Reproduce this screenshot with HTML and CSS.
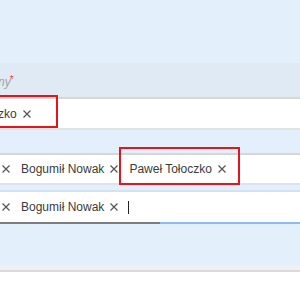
FILE: index.html
```html
<!doctype html>
<html lang="pl">
<head>
<meta charset="utf-8">
<title>Osoby</title>
<link rel="stylesheet" href="styles.css">
</head>
<body>

<div class="panel">
    <div class="top"></div>
    <div class="label">ny<span class="req">*</span></div>

    <div class="field f1">
        <span class="tag mark1">zko<svg class="x" viewBox="0 0 8 8"><path d="M0.5 0.5L7.5 7.5M7.5 0.5L0.5 7.5"/></svg></span>
    </div>

    <div class="field f2">
        <span class="tag lead"><svg class="x" viewBox="0 0 8 8"><path d="M0.5 0.5L7.5 7.5M7.5 0.5L0.5 7.5"/></svg></span>
        <span class="tag">Bogumił Nowak<svg class="x" viewBox="0 0 8 8"><path d="M0.5 0.5L7.5 7.5M7.5 0.5L0.5 7.5"/></svg></span>
        <span class="tag mark2">Paweł Tołoczko<svg class="x" viewBox="0 0 8 8"><path d="M0.5 0.5L7.5 7.5M7.5 0.5L0.5 7.5"/></svg></span>
    </div>

    <div class="field f3">
        <div class="line">
            <span class="tag lead"><svg class="x" viewBox="0 0 8 8"><path d="M0.5 0.5L7.5 7.5M7.5 0.5L0.5 7.5"/></svg></span>
            <span class="tag">Bogumił Nowak<svg class="x" viewBox="0 0 8 8"><path d="M0.5 0.5L7.5 7.5M7.5 0.5L0.5 7.5"/></svg></span>
            <span class="caret"></span>
        </div>
        <div class="bar"></div>
    </div>

    <div class="spacer"></div>
</div>
<div class="foot"></div>

</body>
</html>
```

FILE: styles.css
```css
html, body{
    margin: 0;
    padding: 0;
    background: #fff;
    overflow: hidden;
}
body{
    font-family: "Liberation Sans", Arial, sans-serif;
    font-size: 12px;
    color: #3b3b3b;
}
.panel{
    background: #e3f0fb;
}
.top{
    height: 63px;
}
.label{
    height: 34px;
    line-height: 34px;
    padding-left: 0;
    text-indent: -2px;
    background: #e0eaf4;
    color: #a3a3a3;
    font-style: italic;
    font-size: 12px;
}
.req{
    color: #e04040;
    font-style: normal;
    font-size: 10px;
    vertical-align: 3px;
    margin-left: -1px;
}
.field{
    background: #fff;
    display: flex;
    align-items: center;
}
.f1{
    height: 29px;
    border-top: 2px solid #d6d6d6;
    border-bottom: 2px solid #e3e3e3;
}
.f2{
    margin-top: 23px;
    height: 28px;
    border-top: 2px solid #d6d6d6;
    border-bottom: 2px solid #dbe4ee;
}
.f3{
    margin-top: 5px;
    border-top: 2px solid #d3e2f1;
    flex-direction: column;
    align-items: stretch;
}
.f3 .line{
    height: 30px;
    display: flex;
    align-items: center;
}
.bar{
    height: 2px;
    background: linear-gradient(to right, #7d7d7d 160px, #8fb8ef 160px);
}
.tag{
    position: relative;
    display: inline-flex;
    align-items: center;
    height: 18px;
    white-space: nowrap;
    margin-right: 11px;
}
.tag .x{
    width: 8px;
    height: 8px;
    margin-left: 6px;
    fill: none;
    stroke: #555;
    stroke-width: 1.2;
}
.tag.lead{
    margin-right: 11px;
}
.tag.lead .x{
    margin-left: 2px;
}
.f1 .tag{
    margin-left: -2px;
}
.caret{
    width: 1px;
    height: 13px;
    background: #222;
    margin-left: -1px;
}
.mark1::after,
.mark2::after{
    content: "";
    position: absolute;
    border: 2px solid #e8141c;
}
.mark1::after{
    left: -20px;
    right: -27px;
    top: -10px;
    bottom: -5px;
}
.mark2::after{
    left: -10px;
    right: -14px;
    top: -13px;
    bottom: -7px;
}
.spacer{
    height: 41px;
}
.foot{
    height: 5px;
    background: #f0f0f0;
    border-bottom: 2px solid #dadada;
}
```
